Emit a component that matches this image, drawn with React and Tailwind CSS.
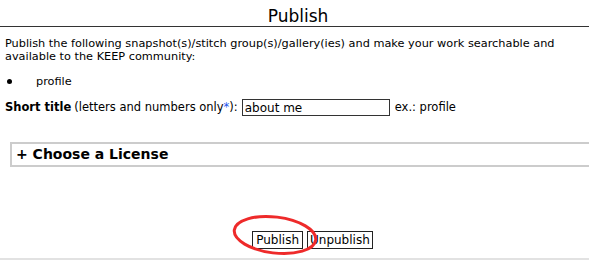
const App = () => {
  return (
    <div
      className="w-[589px] h-[260px] bg-white text-black overflow-hidden relative"
      style={{ fontFamily: '"DejaVu Sans", Verdana, sans-serif' }}
    >
      <h1 className="text-[17px] leading-[20px] text-center pt-[6px] pl-[7px] border-b border-[#333]">
        Publish
      </h1>
      <p className="text-[11.3px] leading-[13px] px-[5px] mt-[10px]">
        Publish the following snapshot(s)/stitch group(s)/gallery(ies) and make your work searchable and
        <br />
        available to the KEEP community:
      </p>
      <ul className="text-[11.3px] leading-[13px] mt-[12px] pl-[7px]">
        <li className="flex items-center">
          <span className="w-[5px] h-[5px] rounded-full bg-black mr-[24px]" />
          profile
        </li>
      </ul>
      <div className="flex items-center text-[11.5px] px-[5px] mt-[11px]">
        <span className="font-bold mr-[3px]">Short title</span>
        <span>
          (letters and numbers only<span className="text-[#2255ee]">*</span>):
        </span>
        <input
          type="text"
          defaultValue="about me"
          className="ml-[4px] w-[148px] h-[17px] border border-[#333] px-[2px] text-[12px] outline-none"
          style={{ fontFamily: '"DejaVu Sans", Verdana, sans-serif' }}
        />
        <span className="ml-[5px]">ex.: profile</span>
      </div>
      <div className="ml-[10px] mt-[26px] h-[25px] border-2 border-r-0 border-[#cccccc] flex items-center pl-[4px]">
        <span className="text-[14px] font-bold">+ Choose a License</span>
      </div>
      <div className="flex justify-center gap-[4px] mt-[64px] pl-[36px] text-[12px]">
        <button className="h-[18px] px-[3px] border border-[#222] bg-white leading-[16px]">
          Publish
        </button>
        <button className="h-[18px] px-[2px] border border-[#222] bg-white leading-[16px]">
          Unpublish
        </button>
      </div>
      <svg
        className="absolute left-[229px] top-[212px]"
        width="92"
        height="46"
        viewBox="0 0 92 46"
      >
        <ellipse
          cx="46"
          cy="23"
          rx="41"
          ry="18"
          transform="rotate(7 46 23)"
          fill="none"
          stroke="#ee2a2a"
          strokeWidth="3"
        />
      </svg>
      <div className="absolute left-0 right-0 top-[258px] h-[2px] bg-[#e2e2e2]" />
    </div>
  );
};

export default App;
